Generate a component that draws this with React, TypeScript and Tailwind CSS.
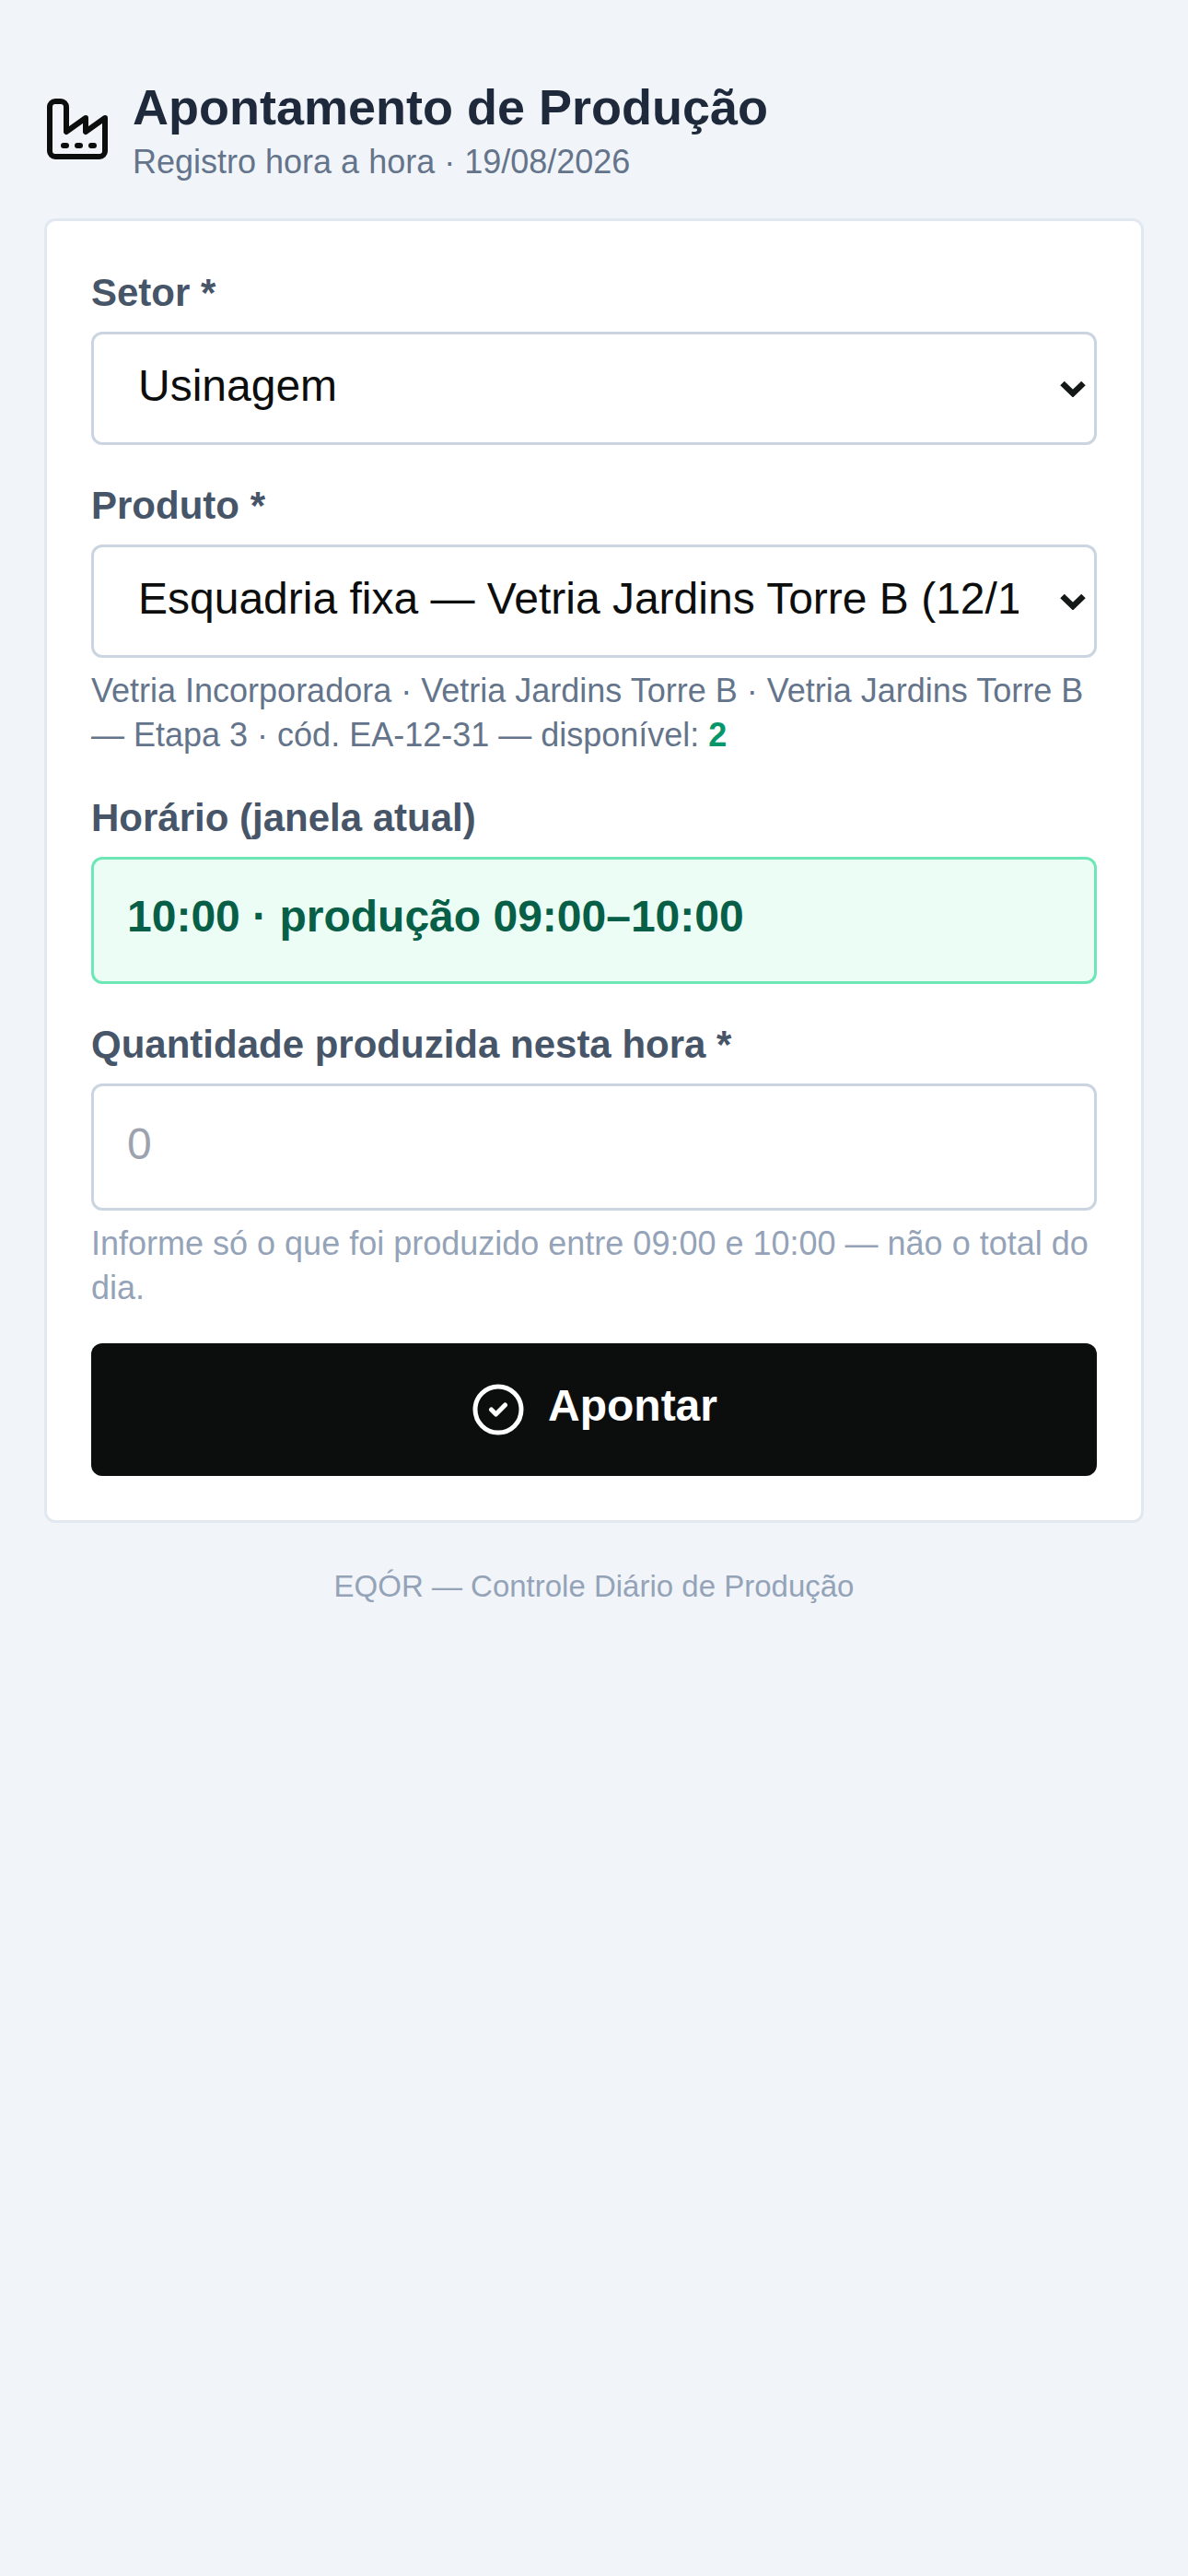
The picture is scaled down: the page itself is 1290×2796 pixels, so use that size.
import { CircleCheck } from 'lucide-react';

const FactoryIcon = () => (
  <svg
    className="shrink-0 text-[#0c0e0d]"
    width="72"
    height="72"
    viewBox="0 0 24 24"
    fill="none"
    stroke="currentColor"
    strokeWidth="2"
    strokeLinecap="round"
    strokeLinejoin="round"
  >
    <path d="M2 20a2 2 0 0 0 2 2h16a2 2 0 0 0 2-2V8l-7 5V8l-7 5V4a2 2 0 0 0-2-2H4a2 2 0 0 0-2 2Z" />
    <path d="M17 18h1" />
    <path d="M12 18h1" />
    <path d="M7 18h1" />
  </svg>
);

const Chevron = () => (
  <svg
    className="absolute right-[12px] top-1/2 -mt-[9px] pointer-events-none"
    width="28"
    height="18"
    viewBox="0 0 28 18"
    fill="none"
  >
    <path d="M2.5 3 14 14 25.500 3" stroke="#141816" strokeWidth="6.500" />
  </svg>
);

const labelClass = 'block text-[42px] leading-[60px] font-bold text-[#475569] mb-[12px]';
const selectClass =
  'appearance-none block w-full h-[123px] bg-white border-[3px] border-[#cbd5e1] rounded-[12px] pl-[48px] pr-[82px] pb-[6px] text-[48px] text-[#0c0e0d]';

export default function App() {
  return (
    <div className="min-h-[2796px] bg-[#f1f5f9] px-[48px] pt-[80px] font-['Liberation_Sans',Arial,sans-serif]">
      <header className="flex items-center gap-[24px] mb-[37px]">
        <FactoryIcon />
        <div>
          <h1 className="text-[54px] leading-[72px] font-bold text-[#1e293b]">Apontamento de Produção</h1>
          <p className="text-[36px] leading-[48px] text-[#64748b]">Registro hora a hora · 19/08/2026</p>
        </div>
      </header>

      <form className="bg-white border-[3px] border-[#e2e8f0] rounded-[12px] p-[48px] flex flex-col gap-[36px]">
        <div>
          <label className={labelClass}>Setor *</label>
          <div className="relative">
            <select className={selectClass} defaultValue="usinagem">
              <option value="usinagem">Usinagem</option>
            </select>
            <Chevron />
          </div>
        </div>

        <div>
          <label className={labelClass}>Produto *</label>
          <div className="relative">
            <select className={selectClass} defaultValue="esquadria">
              <option value="esquadria">Esquadria fixa — Vetria Jardins Torre B (12/100)</option>
            </select>
            <Chevron />
          </div>
          <p className="mt-[12px] text-[36px] leading-[48px] text-[#64748b]">
            Vetria Incorporadora · Vetria Jardins Torre B · Vetria Jardins Torre B — Etapa 3 · cód. EA-12-31 — disponível:{' '}
            <strong className="text-[#059669]">2</strong>
          </p>
        </div>

        <div>
          <label className={labelClass}>Horário (janela atual)</label>
          <div className="h-[138px] flex items-center px-[36px] pb-[9px] bg-[#ecfdf5] border-[3px] border-[#6ee7b7] rounded-[12px] text-[48px] font-bold text-[#065f46]">
            10:00 · produção 09:00–10:00
          </div>
        </div>

        <div>
          <label className={labelClass}>Quantidade produzida nesta hora *</label>
          <input
            type="number"
            placeholder="0"
            className="block w-full h-[138px] bg-white border-[3px] border-[#cbd5e1] rounded-[12px] px-[36px] pb-[8px] text-[48px] text-[#0c0e0d] placeholder:text-[#9ca3af]"
          />
          <p className="mt-[12px] text-[36px] leading-[48px] text-[#94a3b8]">
            Informe só o que foi produzido entre 09:00 e 10:00 — não o total do dia.
          </p>
        </div>

        <button
          type="button"
          className="h-[144px] flex items-center justify-center gap-[24px] bg-[#0c0e0d] rounded-[12px] text-white text-[48px] font-bold"
        >
          <CircleCheck size={60} strokeWidth={2} />
          <span className="pb-[8px]">Apontar</span>
        </button>
      </form>

      <footer className="mt-[45px] text-center text-[33px] leading-[48px] text-[#94a3b8]">
        EQÓR — Controle Diário de Produção
      </footer>
    </div>
  );
}
